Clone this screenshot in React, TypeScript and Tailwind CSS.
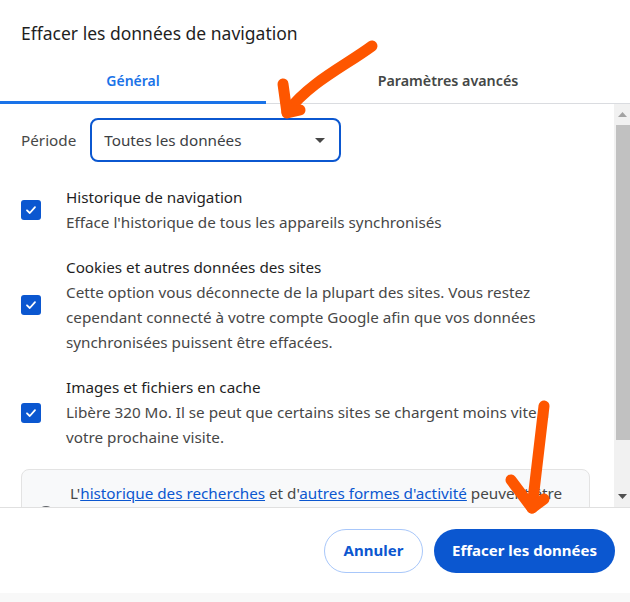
import React from "react";

interface Item {
  title: string;
  lines: string[];
}

const items: Item[] = [
  {
    title: "Historique de navigation",
    lines: ["Efface l'historique de tous les appareils synchronisés"],
  },
  {
    title: "Cookies et autres données des sites",
    lines: [
      "Cette option vous déconnecte de la plupart des sites. Vous restez",
      "cependant connecté à votre compte Google afin que vos données",
      "synchronisées puissent être effacées.",
    ],
  },
  {
    title: "Images et fichiers en cache",
    lines: [
      "Libère 320 Mo. Il se peut que certains sites se chargent moins vite à",
      "votre prochaine visite.",
    ],
  },
];

function CheckBox() {
  return (
    <div className="w-5 h-5 shrink-0 rounded-[3px] bg-[#0b57d0] flex items-center justify-center">
      <svg width="12" height="12" viewBox="0 0 12 12">
        <path d="M2 6.3 L4.8 9 L10 3.2" fill="none" stroke="white" strokeWidth="1.8" strokeLinecap="round" strokeLinejoin="round" />
      </svg>
    </div>
  );
}

function Row({ item }: { item: Item }) {
  return (
    <div className="flex items-center gap-[25px]">
      <CheckBox />
      <div className="leading-[25px] text-[15.25px]">
        <div className="text-[#1f1f1f] whitespace-nowrap">{item.title}</div>
        {item.lines.map((l, i) => (
          <div key={i} className="text-[#474747] whitespace-nowrap">
            {l}
          </div>
        ))}
      </div>
    </div>
  );
}

export default function App() {
  return (
    <div className="relative w-[630px] h-[602px] bg-white overflow-hidden flex flex-col font-['Noto_Sans',sans-serif]">
      {/* titre */}
      <div className="h-[60px] shrink-0 pl-[21px] pt-[19px] text-[17.5px] leading-[28px] text-[#1f1f1f] whitespace-nowrap">
        Effacer les données de navigation
      </div>

      {/* onglets */}
      <div className="h-[44px] shrink-0 flex">
        <div className="w-[272px] flex items-center justify-center text-[14px] font-semibold text-[#1a73e8] border-b-[3px] border-[#1a73e8]">
          Général
        </div>
        <div className="w-[364px] shrink-0 flex items-center justify-center text-[14.3px] font-semibold text-[#444746] border-b border-[#dadce0] pb-[2px]">
          Paramètres avancés
        </div>
      </div>

      {/* contenu défilant */}
      <div className="h-[403px] shrink-0 flex">
        <div className="flex-1 overflow-hidden pl-[21px] pt-[14px]">
          <div className="flex items-center gap-[14px]">
            <span className="text-[15.25px] text-[#474747]">Période</span>
            <div className="w-[251px] h-[44px] rounded-[8px] border-2 border-[#0b57d0] flex items-center justify-between pl-[12px] pr-[14px]">
              <span className="text-[15.25px] text-[#3c4043]">Toutes les données</span>
              <svg width="10" height="5" viewBox="0 0 10 5">
                <path d="M0 0 L10 0 L5 5 Z" fill="#474747" />
              </svg>
            </div>
          </div>

          <div className="mt-[23px] flex flex-col gap-[20px] w-[560px] overflow-hidden">
            {items.map((it) => (
              <Row key={it.title} item={it} />
            ))}
          </div>

          <div className="mt-[19px] w-[569px] h-[80px] rounded-[8px] bg-[#f8f9fa] border border-[#e3e3e3] flex pt-[11px]">
            <div className="w-[48px] shrink-0 flex justify-center pt-[25px]">
              <div className="w-[18px] h-[18px] rounded-full border-2 border-[#5f6368]" />
            </div>
            <div className="text-[15.25px] leading-[25px] text-[#474747] whitespace-nowrap">
              L'<span className="text-[#0b57d0] underline">historique des recherches</span> et d'
              <span className="text-[#0b57d0] underline">autres formes d'activité</span> peuvent être
            </div>
          </div>
        </div>

        {/* barre de défilement */}
        <div className="w-[16px] shrink-0 bg-[#f1f1f1] flex flex-col items-end">
          <div className="h-[21px] w-full flex items-center justify-center">
            <svg width="9" height="5" viewBox="0 0 9 5">
              <path d="M0 5 L9 5 L4.5 0 Z" fill="#a3a3a3" />
            </svg>
          </div>
          <div className="w-[14px] h-[315px] bg-[#c1c1c1]" />
          <div className="flex-1" />
          <div className="h-[21px] w-full flex items-center justify-center">
            <svg width="9" height="5" viewBox="0 0 9 5">
              <path d="M0 0 L9 0 L4.5 5 Z" fill="#505050" />
            </svg>
          </div>
        </div>
      </div>

      {/* pied */}
      <div className="h-[86px] shrink-0 bg-white border-t border-[#e0e0e0] flex items-center justify-end gap-[11px] pr-[15px]">
        <button className="w-[99px] h-[44px] rounded-full border border-[#a8c7fa] text-[#0b57d0] text-[15px] font-bold">
          Annuler
        </button>
        <button className="w-[181px] h-[44px] rounded-full bg-[#0b57d0] text-white text-[15px] font-bold">
          Effacer les données
        </button>
      </div>
      <div className="flex-1 bg-[#f8f8f8]" />

      {/* flèches dessinées */}
      <svg className="absolute inset-0 pointer-events-none" width="630" height="602" viewBox="0 0 630 602">
        <g fill="none" stroke="#fe5600" strokeWidth="11" strokeLinecap="round" strokeLinejoin="round">
          <path d="M372 46 C345 66 310 82 287 112" />
          <path d="M283 84 L287 113 L300 110" />
          <path d="M544 406 L532 508" />
          <path d="M511 480 L532 508 L544 499" />
        </g>
      </svg>
    </div>
  );
}
